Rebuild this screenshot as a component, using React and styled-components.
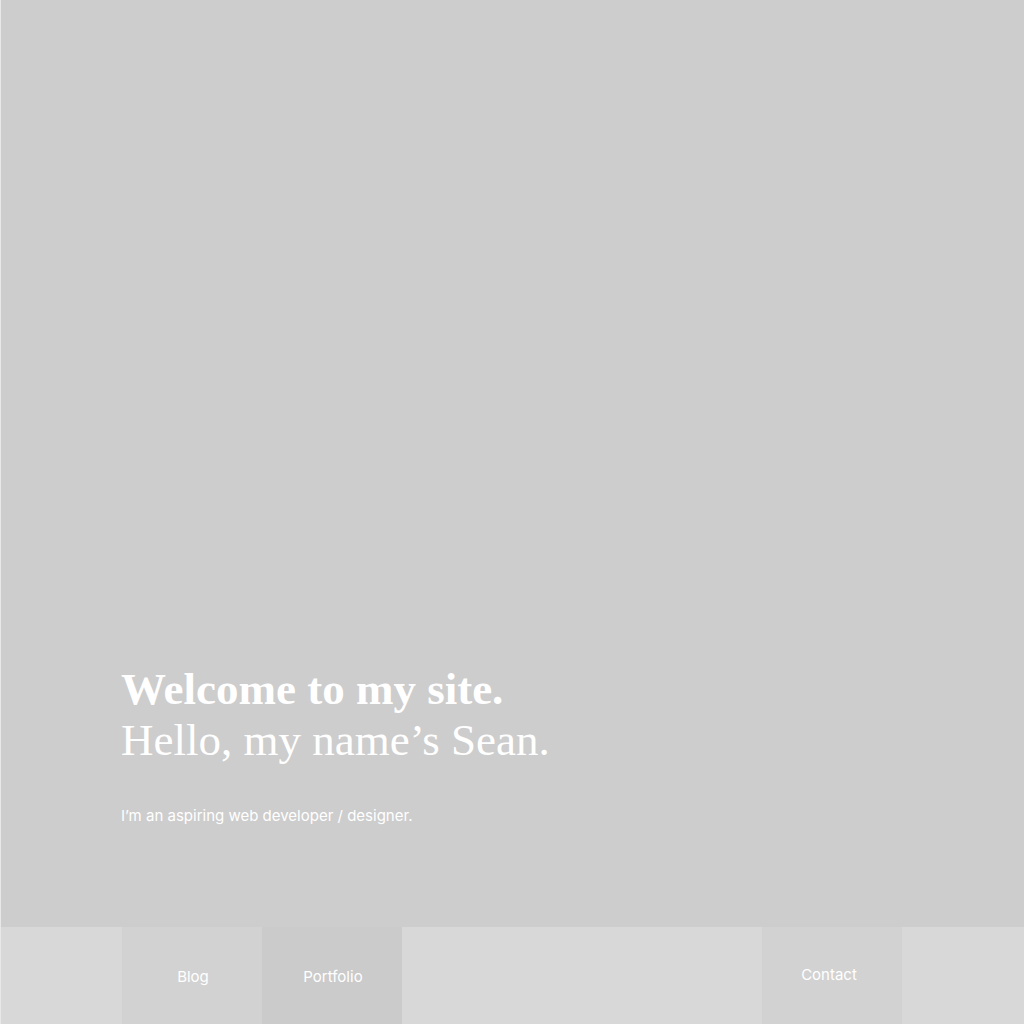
import React from "react";
import styled, { createGlobalStyle } from "styled-components";

const GlobalStyle = createGlobalStyle`
  *, *::before, *::after { box-sizing: border-box; }
  body { margin: 0; background: #cdcdcd; }
`;

const Page = styled.div`
  min-height: 100vh;
  display: flex;
  flex-direction: column;
  border-left: 1px solid #e8e8e8;
  background: #cdcdcd;
  color: #fff;
  font-family: Inter, "Liberation Sans", sans-serif;
`;

const Hero = styled.main`
  flex: 1;
  display: flex;
  flex-direction: column;
  justify-content: flex-end;
  padding: 0 120px 99px;
`;

const Title = styled.h1`
  margin: 0;
  font-family: "Liberation Serif", serif;
  font-size: 45px;
  line-height: 51px;
  font-weight: 400;
`;

const Line = styled.span`
  display: block;
  font-weight: ${({ $bold }) => ($bold ? 700 : 400)};
`;

const Intro = styled.p`
  margin: 38px 0 0;
  font-size: 15px;
  line-height: 24px;
`;

const Nav = styled.nav`
  display: flex;
  height: 97px;
  padding: 0 122px 0 121px;
  background: #d8d8d8;
`;

const Tab = styled.a`
  display: flex;
  align-items: center;
  justify-content: center;
  width: 140px;
  margin-left: ${({ $end }) => ($end ? "auto" : 0)};
  padding: ${({ $end }) => ($end ? "0 6px 2px 0" : "2px 0 0 2px")};
  background: ${({ $active }) => ($active ? "#cbcbcb" : "#d2d2d2")};
  color: #fff;
  font-size: 15px;
  line-height: 24px;
  text-decoration: none;
`;

export default function App() {
  return (
    <Page>
      <GlobalStyle />
      <Hero>
        <Title>
          <Line $bold>Welcome to my site.</Line>
          <Line>Hello, my name’s Sean.</Line>
        </Title>
        <Intro>I’m an aspiring web developer / designer.</Intro>
      </Hero>
      <Nav aria-label="Main">
        <Tab href="#blog">Blog</Tab>
        <Tab href="#portfolio" $active>Portfolio</Tab>
        <Tab href="#contact" $end>Contact</Tab>
      </Nav>
    </Page>
  );
}
